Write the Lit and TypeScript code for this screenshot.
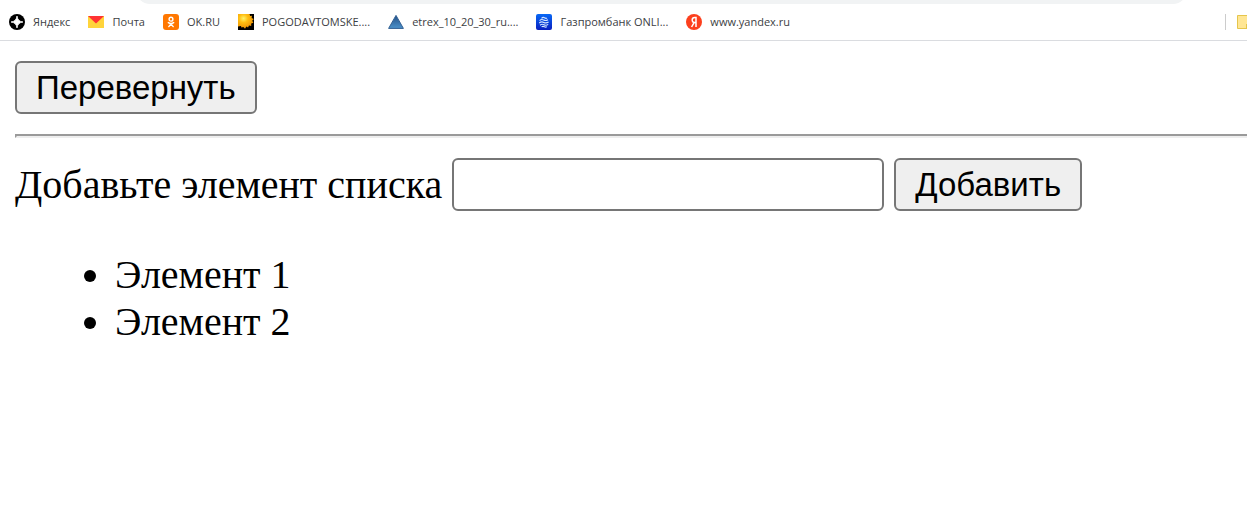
import { LitElement, html, css, svg } from "lit";
import { customElement, state } from "lit/decorators.js";

const icon = (body: unknown) =>
  html`<svg class="icon" viewBox="0 0 16 16" aria-hidden="true">${body}</svg>`;

const bookmarks = [
  {
    label: "Яндекс",
    icon: icon(svg`<circle cx="8" cy="8" r="8" fill="#000"/>
      <path d="M8 2Q8.6 7.4 14 8Q8.6 8.6 8 14Q7.4 8.6 2 8Q7.4 7.4 8 2Z" fill="#fff" stroke="#fff" stroke-width=".8"/>`),
  },
  {
    label: "Почта",
    icon: icon(svg`<path d="M0 2H16V14H0Z" fill="#ffd43b"/><path d="M0 2H16L8 9.5Z" fill="#f33"/>`),
  },
  {
    label: "OK.RU",
    icon: icon(svg`<rect width="16" height="16" rx="3" fill="#ff7700"/>
      <g fill="none" stroke="#fff" stroke-width="1.4" stroke-linecap="round">
        <circle cx="8" cy="5.2" r="1.9"/><path d="M5.3 8.6Q8 10.4 10.7 8.6M8 10L5.8 12.6M8 10L10.2 12.6"/></g>`),
  },
  {
    label: "POGODAVTOMSKE....",
    icon: icon(svg`<defs><radialGradient id="sun" cx=".35" cy=".3" r=".8"><stop offset="0" stop-color="#fff36a"/><stop offset=".35" stop-color="#ffbe12"/><stop offset="1" stop-color="#e88400"/></radialGradient></defs>
      <rect width="16" height="16" fill="#000"/>
      <path d="M0 0H11.5L12.2 2L14 1.8L13.6 4L15.8 5L14.2 6.8L15.4 8.8L13.2 9.4L13.2 12L11 11.6L10 13.6L8.4 12.6L7 14.8L5.4 13L3.4 13.6L3 12L0 12.4Z" fill="url(#sun)"/>`),
  },
  {
    label: "etrex_10_20_30_ru....",
    icon: icon(svg`<defs><linearGradient id="tri" x2="0" y2="1"><stop offset="0" stop-color="#234f86"/><stop offset="1" stop-color="#4c92cb"/></linearGradient></defs>
      <path d="M8 1.4L15.4 14.4H.6Z" fill="url(#tri)" stroke="#315f92" stroke-width="1" stroke-linejoin="round"/>`),
  },
  {
    label: "Газпромбанк ONLI...",
    icon: icon(svg`<defs><linearGradient id="gpb" x2="0" y2="1"><stop offset="0" stop-color="#0768f5"/><stop offset="1" stop-color="#0a1fc0"/></linearGradient></defs>
      <rect width="16" height="16" rx="2" fill="url(#gpb)"/>
      <path d="M5.5 4.4Q7 2.8 8.5 3.8T11 4M3.6 6.6Q5.5 4.8 7.6 6T12 5.8M3.2 9Q5.5 7.2 7.8 8.4T12.6 8M4 11.2Q6 9.6 8 10.8T12.2 10.4M5.6 12.8Q7 12 8.4 12.8T10.8 12.6" fill="none" stroke="#d5e5ff" stroke-width="1.1"/>`),
  },
  {
    label: "www.yandex.ru",
    icon: icon(svg`<circle cx="8" cy="8" r="8" fill="#fc3f1d"/>
      <path d="M10 13V3.5H8.8Q6.2 3.5 6.2 6T8.6 8.4H10M8.2 8.4L5.6 13" fill="none" stroke="#fff" stroke-width="1.5"/>`),
  },
];

@customElement("bookmarks-bar")
export class BookmarksBar extends LitElement {
  static styles = css`
    :host { display: block; }
    .toolbar { height: 4px; padding: 0 60px 0 136px; overflow: hidden; }
    .address { height: 28px; margin-top: -24px; border-radius: 14px; background: #f1f3f4; }
    .bar {
      display: flex; align-items: center; justify-content: space-between;
      height: 36px; padding-left: 9px; overflow: hidden;
      border-bottom: 1px solid #dadce0;
      font: 11px/16px "Open Sans", "Noto Sans", sans-serif;
    }
    .links { display: flex; gap: 18px; }
    .link { display: flex; align-items: center; gap: 8px; color: #3c4043; text-decoration: none; white-space: nowrap; }
    .icon { display: block; flex: none; width: 16px; height: 16px; }
    .more { display: flex; align-items: center; flex: none; gap: 11px; width: 22px; }
    .divider { flex: none; width: 1px; height: 16px; background: #ccc; }
  `;

  render() {
    return html`
      <div class="toolbar"><div class="address"></div></div>
      <nav class="bar">
        <div class="links">
          ${bookmarks.map((b) => html`<a class="link" href="#">${b.icon}<span>${b.label}</span></a>`)}
        </div>
        <div class="more">
          <span class="divider"></span>
          ${icon(svg`<path d="M.5 1.5H15.5V14.5H.5Z" fill="#ffe694" stroke="#e5c54b"/><path d="M9 14V10H16V14Z" fill="#e5c54b"/>`)}
        </div>
      </nav>`;
  }
}

@customElement("app-root")
export class AppRoot extends LitElement {
  static styles = css`
    :host { display: block; background: #fff; color: #000; overflow: hidden; font: 40px/47px "Liberation Serif", serif; }
    .page { padding: 20px 0 20px 15px; }
    .button, .field {
      box-sizing: border-box; height: 53px; margin: 0;
      border: 2px solid #767676; border-radius: 6px;
      font: 33px/39px "Liberation Sans", sans-serif; color: #000;
    }
    .button { display: block; flex: none; padding: 0 19px; background: #efefef; }
    .field { width: 432px; padding: 0 5px; background: #fff; }
    .rule { height: 4px; box-sizing: border-box; margin: 20px 0; border: 0; border-top: 2px solid #9a9a9a; border-left: 2px solid #9a9a9a; border-bottom: 2px solid #eee; }
    .form { display: flex; align-items: center; gap: 10px; }
    .list { margin: 40px 0; padding: 0 0 0 100px; }
  `;

  @state() private items = ["Элемент 1", "Элемент 2"];

  private reverse() {
    this.items = [...this.items].reverse();
  }

  private add(e: Event) {
    e.preventDefault();
    const field = this.renderRoot.querySelector<HTMLInputElement>("#item")!;
    if (field.value) this.items = [...this.items, field.value];
    field.value = "";
  }

  render() {
    return html`
      <bookmarks-bar></bookmarks-bar>
      <main class="page">
        <button class="button" type="button" @click=${this.reverse}>Перевернуть</button>
        <hr class="rule" />
        <form class="form" @submit=${this.add}>
          <label for="item">Добавьте элемент списка</label>
          <input class="field" id="item" type="text" />
          <button class="button" type="submit">Добавить</button>
        </form>
        <ul class="list">
          ${this.items.map((item) => html`<li>${item}</li>`)}
        </ul>
      </main>`;
  }
}
